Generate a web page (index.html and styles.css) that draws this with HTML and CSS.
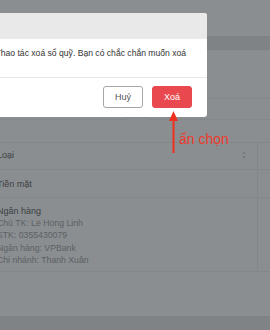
FILE: index.html
```html
<!DOCTYPE html>
<html lang="vi">
<head>
<meta charset="utf-8">
<link rel="stylesheet" href="styles.css">
</head>
<body>
<div class="page">
  <div class="top"></div>
  <div class="bar"></div>
  <div class="filters">
    <div class="box box-a"></div>
    <div class="box box-b"></div>
  </div>
  <div class="table">
    <div class="row head">
      <div class="cell main"><span>Loại</span><span class="sort"></span></div>
      <div class="cell side"></div>
    </div>
    <div class="row r2">
      <div class="cell main"><span>Tiền mặt</span></div>
      <div class="cell side"></div>
    </div>
    <div class="row r3">
      <div class="cell main bank">
        <div class="strong">Ngân hàng</div>
        <div>Chủ TK: Le Hong Linh</div>
        <div>STK: 0355430079</div>
        <div>Ngân hàng: VPBank</div>
        <div>Chi nhánh: Thanh Xuân</div>
      </div>
      <div class="cell side"></div>
    </div>
  </div>
  <div class="filler"></div>
  <div class="bottom"></div>
</div>

<div class="modal">
  <div class="modal-head"></div>
  <div class="modal-body">Thao tác xoá sổ quỹ. Bạn có chắc chắn muốn xoá</div>
  <div class="modal-foot">
    <button class="btn btn-cancel">Huỷ</button>
    <button class="btn btn-danger">Xoá</button>
  </div>
</div>

<svg class="arrow" width="16" height="46" viewBox="0 0 16 46">
  <polygon points="3,11 7.5,1 12,11" fill="#f0301f"/>
  <rect x="6.5" y="10" width="2" height="33" fill="#f0301f"/>
</svg>
<div class="note">ấn chọn</div>
</body>
</html>
```

FILE: styles.css
```css
* { box-sizing: border-box; margin: 0; padding: 0; }
html, body { width: 270px; height: 330px; overflow: hidden; }
body {
  background: #8a8e91;
  font-family: "Liberation Sans", Arial, sans-serif;
  position: relative;
}
.page { display: flex; flex-direction: column; height: 330px; }
.top { height: 36px; }
.bar { height: 14px; background: #7f8386; }
.filters {
  margin-top: 48px;
  height: 22px;
  display: flex;
  gap: 17px;
  margin-left: -10px;
}
.box {
  height: 22px;
  border: 1px solid #84888b;
  border-radius: 4px;
}
.box-a { width: 138px; }
.box-b { flex: 1; margin-right: -10px; }
.table {
  margin-top: 22px;
  margin-left: -3px;
  border-top: 1px solid #83878a;
}
.row {
  display: grid;
  grid-template-columns: 261px 1fr;
  border-bottom: 1px solid #83878a;
  font-size: 9px;
  color: #3c4043;
}
.cell.main { border-right: 1px solid #83878a; }
.head { height: 27px; }
.r2 { height: 28px; }
.r3 { height: 74px; }
.head .main, .r2 .main {
  display: flex;
  align-items: center;
  justify-content: space-between;
  padding-right: 10px;
  padding-bottom: 2px;
}
.r2 .main { padding-bottom: 0; }
.sort {
  width: 5px;
  height: 8px;
  position: relative;
}
.sort::before, .sort::after {
  content: "";
  position: absolute;
  left: 0;
  border-left: 2.5px solid transparent;
  border-right: 2.5px solid transparent;
}
.sort::before { top: 0; border-bottom: 3px solid #777b7e; }
.sort::after { bottom: 0; border-top: 3px solid #777b7e; }
.bank {
  padding-top: 7px;
  line-height: 12.2px;
  font-size: 8.7px;
  color: #5c6063;
}
.bank .strong { color: #3c4043; font-size: 9px; }
.filler { flex: 1; }
.bottom { height: 14px; background: #7f8386; }

.modal {
  position: absolute;
  left: -21px;
  top: 13px;
  width: 228px;
  background: #fff;
  border-radius: 3px;
  overflow: hidden;
}
.modal-head { height: 26px; background: #e9e9e9; }
.modal-body {
  height: 39px;
  padding: 8px 0 0 16.5px;
  font-size: 8.6px;
  line-height: 12px;
  color: #333;
  white-space: nowrap;
  border-bottom: 1px solid #e8e8e8;
}
.modal-foot {
  display: flex;
  justify-content: flex-end;
  gap: 9px;
  padding: 8px 15px 9px 0;
}
.btn {
  width: 40px;
  height: 22px;
  border-radius: 3px;
  font-family: "Liberation Sans", Arial, sans-serif;
  font-size: 9px;
}
.btn-cancel { background: #fff; border: 1px solid #a6a6a6; color: #555; }
.btn-danger { background: #e8484e; border: 1px solid #e8484e; color: #fff; }

.arrow { position: absolute; left: 166px; top: 110px; }
.note {
  position: absolute;
  left: 179px;
  top: 131px;
  font-size: 14px;
  line-height: 16px;
  color: #f03a2c;
}
```
